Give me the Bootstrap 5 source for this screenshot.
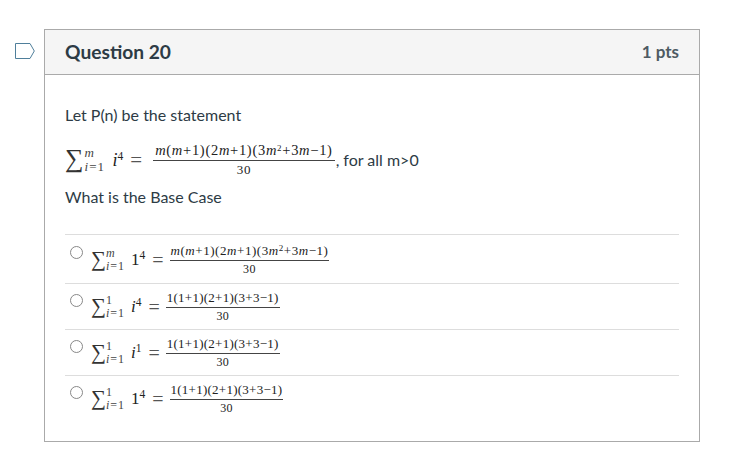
<!DOCTYPE html>
<html lang="en">
<head>
  <meta charset="UTF-8">
  <title>Question 20</title>
  <meta name="viewport" content="width=device-width, initial-scale=1" />
  <link rel="stylesheet" href="https://cdn.jsdelivr.net/npm/bootstrap@5.3.0/dist/css/bootstrap.min.css">
  <style>
    body { font-family: Lato, "Liberation Sans", sans-serif; color: #2d3b45; background: #fff; }
    .quiz-wrap { padding: 29px 41px 0 15px; }
    .flag-col { width: 29px; padding-top: 14px; }
    .flag-col svg { display: block; }
    .q-card { width: 656px; height: 413px; border: 1px solid #aaa; border-radius: 0; }
    .q-head { height: 45px; background: #f5f5f5; border-bottom: 1px solid #aaa; padding: 0 20px 1px; }
    .q-title { font-size: 19.2px; font-weight: 700; line-height: 1; margin: 0; }
    .q-pts { font-size: 17px; font-weight: 700; color: #4d5a63; }
    .q-body { padding: 30px 20px 0; font-size: 16px; line-height: 20px; }
    .q-text { margin-bottom: 18px; }
    .q-formula { height: 34px; margin-bottom: 10px; }
    .q-answers { margin-top: 27px; }
    .ans-row { border-top: 1px solid #ddd; padding: 0 5px; }
    .ans-row .mth { align-self: flex-start; }
    .ans-a { height: 49px; padding-top: 10px; }
    .ans-a .mth { margin-top: -1px; }
    .ans-a .mth-frac { letter-spacing: .55px; }
    .ans-b { height: 46px; padding-top: 9px; }
    .ans-b .mth { margin-top: -2px; }
    .ans-radio { width: 13px; height: 13px; border: 1px solid #888; border-radius: 50%; background: #fff; margin: 1px 8px 0 0; flex: none; }
    .mth { font-family: "Liberation Serif", "DejaVu Serif", serif; color: #222; display: inline-flex; align-items: center; white-space: nowrap; }
    .mth i { font-style: italic; }
    .mth-sum { font-size: 21px; line-height: 20px; padding-bottom: 3px; color: #333; }
    .mth-lim { display: inline-flex; flex-direction: column; font-size: 12px; line-height: 13px; width: 20px; color: #444; letter-spacing: 1px; }
    .mth-term { font-size: 17px; line-height: 20px; margin: 0 7px 0 5px; }
    .mth-term sup { font-size: 11.5px; top: -0.5em; }
    .mth-eq { font-size: 20px; line-height: 20px; margin-right: 6px; color: #555; }
    .mth-frac { display: inline-flex; flex-direction: column; align-items: center; font-size: 13px; line-height: 14px; letter-spacing: .25px; }
    .mth-num { display: block; height: 17px; border-bottom: 1px solid #444; padding: 0 1px; }
    .mth-num sup { font-size: 9px; top: -0.4em; }
    .mth-den { padding-top: 2px; font-size: 12px; line-height: 13px; }
    .mth-big .mth-sum { font-size: 26px; margin-right: 1px; }
    .mth-big .mth-lim { font-size: 13px; line-height: 14px; width: 21px; }
    .mth-big .mth-term { font-size: 18px; margin: 0 7px; }
    .mth-big .mth-eq { margin-right: 11px; font-size: 21px; }
    .mth-big .mth-frac { font-size: 14.5px; line-height: 15px; letter-spacing: .7px; }
    .mth-big .mth-num { height: 18px; padding: 0 2px; }
    .mth-big .mth-den { font-size: 13px; line-height: 14px; }
    .for-all { margin-left: 1px; }
  </style>
</head>
<body>

<div class="quiz-wrap d-flex">
  <div class="flag-col">
    <svg width="20" height="16" viewBox="0 0 20 16"><path d="M0.5 0.5H15L19.3 8L15 15.5H0.5Z" fill="#fff" stroke="#4f7f9b"/></svg>
  </div>

  <div class="q-card">
    <div class="q-head d-flex justify-content-between align-items-center">
      <h2 class="q-title">Question 20</h2>
      <div class="q-pts">1 pts</div>
    </div>

    <div class="q-body">
      <div class="q-text">Let P(n) be the statement</div>

      <div class="q-formula d-flex align-items-center">
        <span class="mth mth-big">
          <span class="mth-sum">∑</span>
          <span class="mth-lim"><span><i>m</i></span><span><i>i</i>=1</span></span>
          <span class="mth-term"><i>i</i><sup>4</sup></span>
          <span class="mth-eq">=</span>
          <span class="mth-frac">
            <span class="mth-num"><i>m</i>(<i>m</i>+1)(2<i>m</i>+1)(3<i>m</i><sup>2</sup>+3<i>m</i>−1)</span>
            <span class="mth-den">30</span>
          </span>
        </span>
        <span class="for-all">, for all m&gt;0</span>
      </div>

      <div>What is the Base Case</div>

      <div class="q-answers">
        <div class="ans-row ans-a d-flex">
          <span class="ans-radio"></span>
          <span class="mth">
            <span class="mth-sum">∑</span>
            <span class="mth-lim"><span><i>m</i></span><span><i>i</i>=1</span></span>
            <span class="mth-term">1<sup>4</sup></span>
            <span class="mth-eq">=</span>
            <span class="mth-frac">
              <span class="mth-num"><i>m</i>(<i>m</i>+1)(2<i>m</i>+1)(3<i>m</i><sup>2</sup>+3<i>m</i>−1)</span>
              <span class="mth-den">30</span>
            </span>
          </span>
        </div>
        <div class="ans-row ans-b d-flex">
          <span class="ans-radio"></span>
          <span class="mth">
            <span class="mth-sum">∑</span>
            <span class="mth-lim"><span>1</span><span><i>i</i>=1</span></span>
            <span class="mth-term"><i>i</i><sup>4</sup></span>
            <span class="mth-eq">=</span>
            <span class="mth-frac">
              <span class="mth-num">1(1+1)(2+1)(3+3−1)</span>
              <span class="mth-den">30</span>
            </span>
          </span>
        </div>
        <div class="ans-row ans-b d-flex">
          <span class="ans-radio"></span>
          <span class="mth">
            <span class="mth-sum">∑</span>
            <span class="mth-lim"><span>1</span><span><i>i</i>=1</span></span>
            <span class="mth-term"><i>i</i><sup>1</sup></span>
            <span class="mth-eq">=</span>
            <span class="mth-frac">
              <span class="mth-num">1(1+1)(2+1)(3+3−1)</span>
              <span class="mth-den">30</span>
            </span>
          </span>
        </div>
        <div class="ans-row ans-b d-flex">
          <span class="ans-radio"></span>
          <span class="mth">
            <span class="mth-sum">∑</span>
            <span class="mth-lim"><span>1</span><span><i>i</i>=1</span></span>
            <span class="mth-term">1<sup>4</sup></span>
            <span class="mth-eq">=</span>
            <span class="mth-frac">
              <span class="mth-num">1(1+1)(2+1)(3+3−1)</span>
              <span class="mth-den">30</span>
            </span>
          </span>
        </div>
      </div>
    </div>
  </div>
</div>

<script src="https://cdn.jsdelivr.net/npm/bootstrap@5.3.0/dist/js/bootstrap.bundle.min.js"></script>
</body>
</html>
